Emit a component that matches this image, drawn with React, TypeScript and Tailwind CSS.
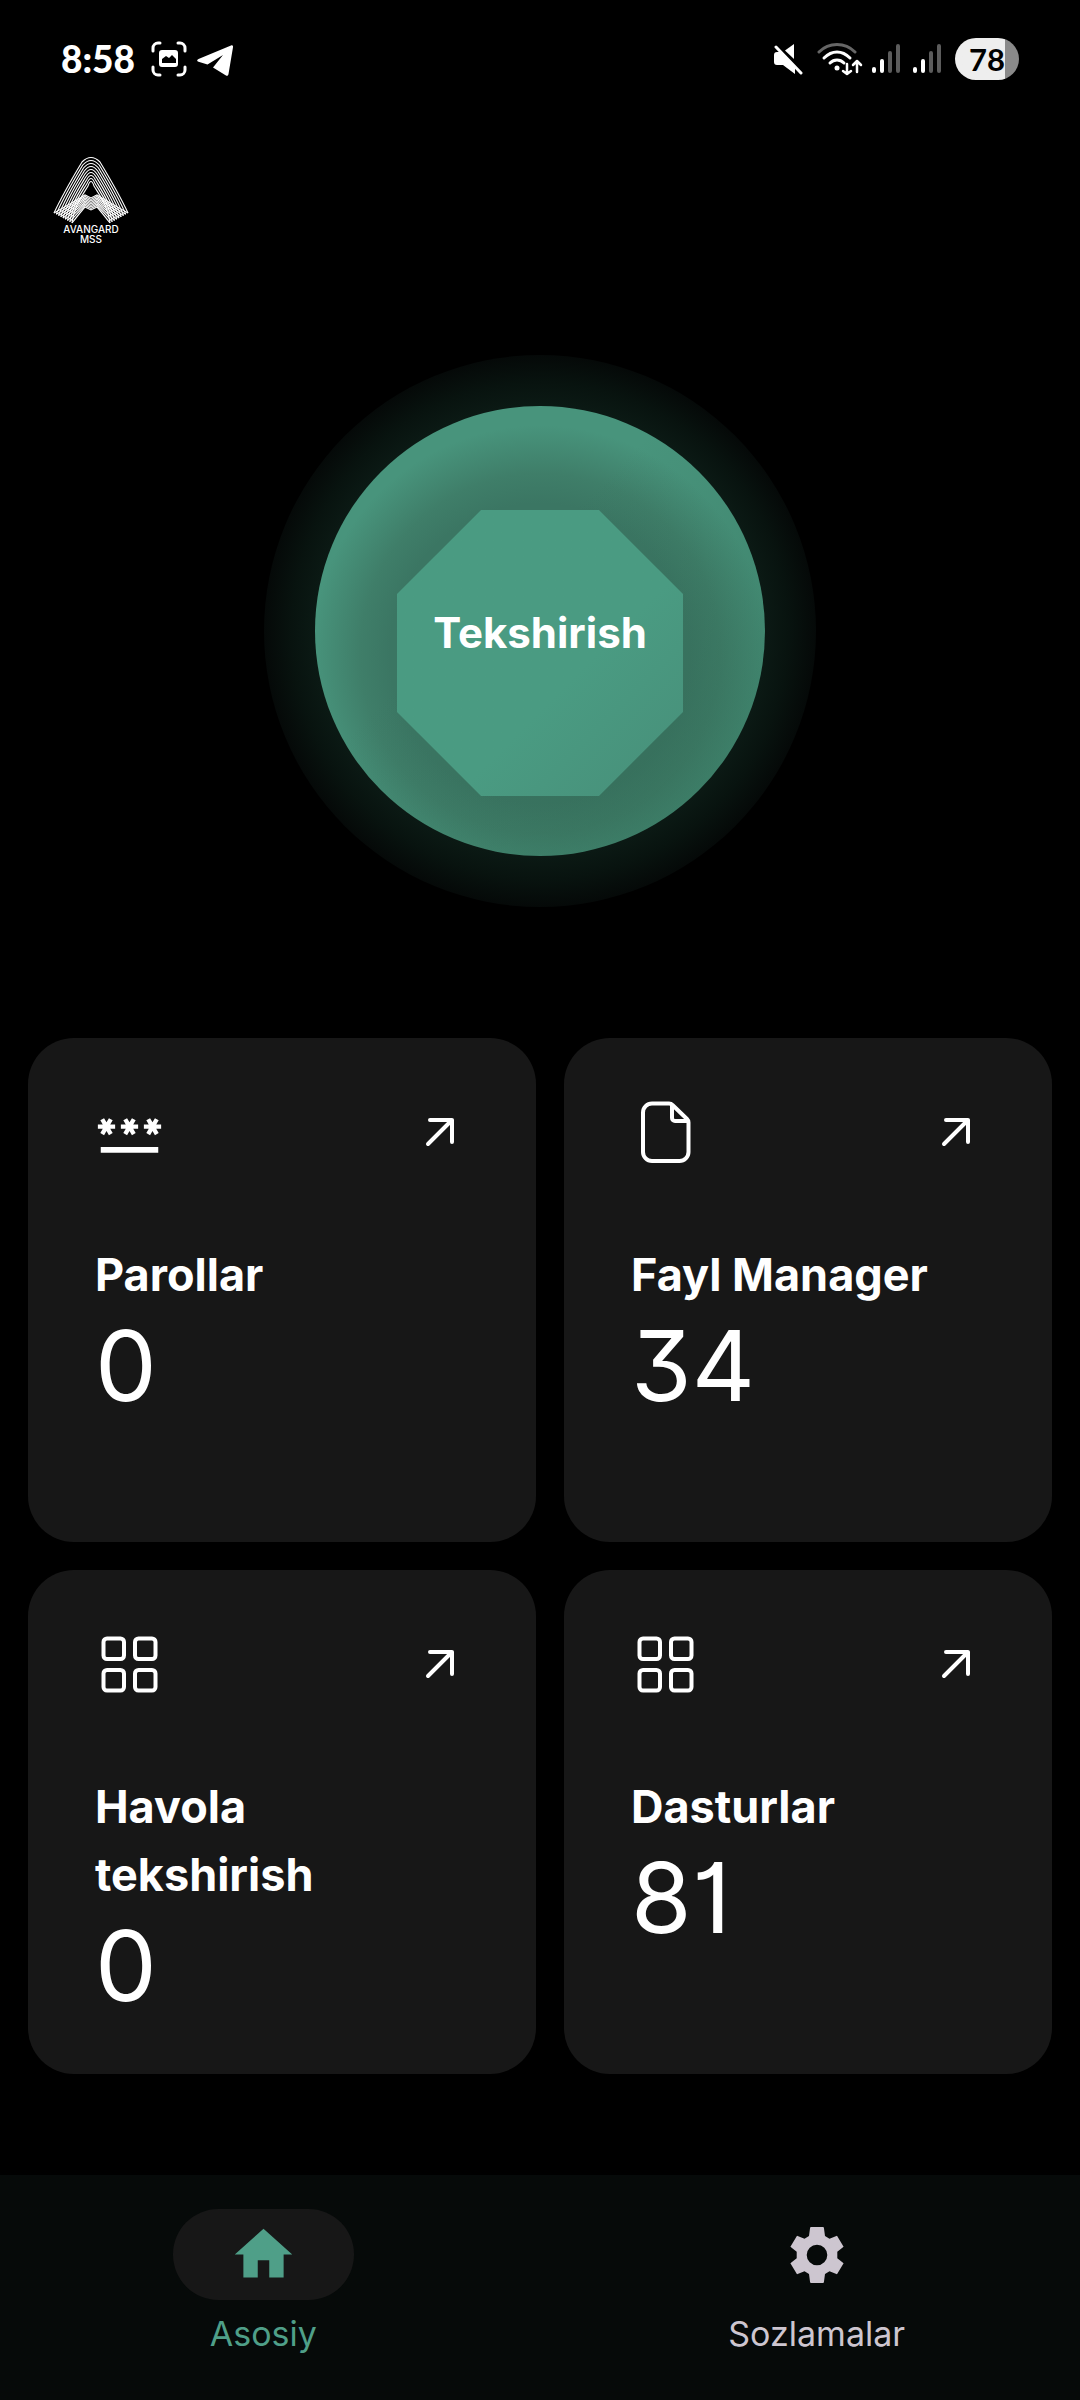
import clsx from 'clsx';
import type { ReactNode } from 'react';
import { MdHome, MdPassword } from 'react-icons/md';

type Tile = {
  title: string;
  count: number;
  href: string;
  icon: ReactNode;
};

const tiles: Tile[] = [
  { title: 'Parollar', count: 0, href: '#passwords', icon: <MdPassword className="size-[69px]" aria-hidden="true" /> },
  { title: 'Fayl Manager', count: 34, href: '#files', icon: <FileIcon /> },
  { title: 'Havola tekshirish', count: 0, href: '#links', icon: <GridIcon /> },
  { title: 'Dasturlar', count: 81, href: '#apps', icon: <GridIcon /> },
];

export default function App() {
  return (
    <div className="flex min-h-screen flex-col bg-black font-['Inter',sans-serif] text-white">
      <StatusBar />
      <header className="flex px-[53px] pt-[38px]">
        <Logo />
      </header>
      <main className="flex flex-col px-7">
        <ScanButton />
        <div className="mt-[131px] grid grid-cols-[508fr_488fr] gap-7">
          {tiles.map((tile) => (
            <TileCard key={tile.title} tile={tile} />
          ))}
        </div>
      </main>
      <BottomNav />
    </div>
  );
}

function ScanButton() {
  return (
    <div className="mt-[111px] flex size-[552px] items-center justify-center self-center rounded-full bg-[radial-gradient(closest-side,#0b1914_82%,#08130f_90%,#050908_100%)]">
      <button
        type="button"
        className="grid size-[450px] cursor-pointer place-content-center place-items-center rounded-full bg-[linear-gradient(135deg,transparent_40%,#2f655080_100%),radial-gradient(circle_at_50%_55%,#3b7663_150px,#3f7e69_180px,#48947c_228px)]"
      >
        <span
          aria-hidden="true"
          className="col-start-1 row-start-1 mt-11 size-[286px] bg-linear-to-br from-[#4a9b82] from-60% to-[#478f79] [clip-path:polygon(29.4%_0,70.6%_0,100%_29.4%,100%_70.6%,70.6%_100%,29.4%_100%,0_70.6%,0_29.4%)]"
        />
        <span className="z-10 col-start-1 row-start-1 pt-1 text-[42px] font-bold leading-[52px]">Tekshirish</span>
      </button>
    </div>
  );
}

function TileCard({ tile }: { tile: Tile }) {
  return (
    <a href={tile.href} className="flex min-h-[504px] flex-col rounded-[46px] bg-[#171717] px-[67px] pt-[60px]">
      <div className="flex items-center justify-between">
        {tile.icon}
        <svg viewBox="0 0 58 58" className="size-[58px]" fill="none" stroke="currentColor" strokeWidth="4" strokeLinecap="round" strokeLinejoin="round" aria-hidden="true">
          <path d="M17 40 41 16M19 16H41V38" />
        </svg>
      </div>
      <h2 className="mt-[74px] text-[45px] font-bold leading-[68px]">{tile.title}</h2>
      <p className="text-[98px] leading-[113px] [font-feature-settings:'cv01','cv09']">{tile.count}</p>
    </a>
  );
}

function BottomNav() {
  return (
    <nav className="mt-auto flex justify-between bg-[#060a09] px-[16%] pb-[42px] pt-[34px]">
      <NavItem label="Asosiy" href="#home" active icon={<MdHome className="size-[69px]" aria-hidden="true" />} />
      <NavItem label="Sozlamalar" href="#settings" icon={<GearIcon />} />
    </nav>
  );
}

function NavItem({ label, href, icon, active }: { label: string; href: string; icon: ReactNode; active?: boolean }) {
  return (
    <a
      href={href}
      aria-current={active ? 'page' : undefined}
      className={clsx('flex w-[181px] flex-col items-center gap-[10px]', active ? 'text-[#4f9f88]' : 'text-[#cdc6d0]')}
    >
      <span className={clsx('flex h-[91px] w-full items-center justify-center rounded-full', active && 'bg-[#171717]')}>
        {icon}
      </span>
      <span className="text-[34px] leading-[48px]">{label}</span>
    </a>
  );
}

function StatusBar() {
  return (
    <div className="flex h-[118px] items-center justify-between px-[61px]">
      <div className="flex items-center">
        <span className="font-['Lato',sans-serif] text-[37px] font-black leading-[42px]">8:58</span>
        {/* screenshot saved */}
        <svg viewBox="0 0 36 36" className="ml-4 size-9" fill="none" stroke="currentColor" strokeWidth="3" strokeLinecap="round" aria-hidden="true">
          <path d="M2 10V7a5 5 0 0 1 5-5h2M27 2h2a5 5 0 0 1 5 5v3M34 26v3a5 5 0 0 1-5 5h-2M9 34H7a5 5 0 0 1-5-5v-3" />
          <path d="M11 9h13a3 3 0 0 1 3 3v11a3 3 0 0 1-3 3H11a3 3 0 0 1-3-3V12a3 3 0 0 1 3-3zM11 22v-4l4-3 3 2 3-3 4 4v4z" fill="currentColor" fillRule="evenodd" stroke="none" />
        </svg>
        <svg viewBox="0 0 36 32" className="ml-[10px] mt-1 h-8 w-9" fill="currentColor" aria-hidden="true">
          <path d="M34 .5c1.500-.6 2.300.2 2 1.800L31.500 29c-.3 1.800-1.400 2.200-2.900 1.200L16 22.500 26 10 10.500 19.500 1.500 16.700C-.3 16.100-.3 14.800 1.500 14z" />
        </svg>
      </div>
      <div className="flex items-center">
        <svg viewBox="0 0 30 32" className="h-8 w-[30px]" fill="white" aria-hidden="true">
          <path d="M21 1V16L12 7.500z" />
          <path d="M4 9H8L22 23V31L10 22H4a3 3 0 0 1-3-3v-7a3 3 0 0 1 3-3z" />
          <path d="M3 4 28 30" stroke="white" strokeWidth="3" strokeLinecap="round" />
        </svg>
        <svg viewBox="0 0 46 34" className="ml-[14px] h-[34px] w-[46px]" fill="none" strokeWidth="3" strokeLinecap="round" strokeLinejoin="round" aria-hidden="true">
          <path d="M2 10C12 0 28 0 38 10" stroke="#666" />
          <path d="M7 16C15 8 25 8 33 16M13 21C17 17 23 17 27 21" stroke="white" />
          <circle cx="20" cy="26" r="2.500" fill="white" />
          <path d="M30 22v10M26 29l4 3 4-3M40 30V20M36 23l4-4 4 4" stroke="white" strokeWidth="2.500" />
        </svg>
        <SignalBars />
        <SignalBars />
        <span className="ml-[10px] flex h-[42px] w-16 items-center justify-center rounded-full bg-linear-to-r from-[#eee] from-78% to-[#8a8a8a] to-78% font-['Lato',sans-serif] text-[31px] font-bold leading-[42px] text-black">
          78
        </span>
      </div>
    </div>
  );
}

function SignalBars() {
  return (
    <svg viewBox="0 0 28 30" className="ml-[9px] mr-1 h-[30px] w-7" fill="none" strokeWidth="4" strokeLinecap="round" aria-hidden="true">
      <path d="M2 25v2M10 17v10" stroke="white" />
      <path d="M18 9v18M26 2v25" stroke="#5c5c5c" />
    </svg>
  );
}

const LOGO_STEPS = 9;

function Logo() {
  const steps = Array.from({ length: LOGO_STEPS }, (_, i) => i / (LOGO_STEPS - 1));
  return (
    <div className="flex w-[76px] flex-col items-center">
      <svg viewBox="0 0 76 68" className="h-[68px] w-[76px]" fill="none" stroke="currentColor" aria-hidden="true">
        {steps.map((t) => {
          const fx = 1 + 18 * t;
          const fy = 57 + 10 * t;
          const top = 2 + 24 * t;
          const sx = 28 + 6 * t;
          const mid = 40 + 12 * t;
          return (
            <g key={t} strokeWidth="1.100">
              {/* arch, then the chevron that runs foot to foot */}
              <path d={`M${fx} ${fy}C${8 + 13 * t} ${42 + 8 * t} ${sx - 5} ${top + 14} ${sx + 1} ${top + 4}Q38 ${top - 5} ${75 - sx} ${top + 4}C${81 - sx} ${top + 14} ${68 - 13 * t} ${42 + 8 * t} ${76 - fx} ${fy}`} />
              <path d={`M${fx} ${fy}Q${24 + 6 * t} ${44 + 9 * t} 32 ${mid - 1}L38 ${mid + 2}L44 ${mid - 1}Q${52 - 6 * t} ${44 + 9 * t} ${76 - fx} ${fy}`} />
            </g>
          );
        })}
      </svg>
      <span className="text-center text-[10px] font-medium leading-[10px]">
        AVANGARD
        <br />
        MSS
      </span>
    </div>
  );
}

function FileIcon() {
  return (
    <svg viewBox="0 0 69 69" className="size-[69px]" fill="none" stroke="currentColor" strokeWidth="4" strokeLinejoin="round" aria-hidden="true">
      <path d="M21 5.500H38a5 5 0 0 1 3.500 1.500L56 21a5 5 0 0 1 1.500 3.500V54a9 9 0 0 1-9 9H21a9 9 0 0 1-9-9V14.500a9 9 0 0 1 9-9z" />
      <path d="M41 7V20a3 3 0 0 0 3 3H57" />
    </svg>
  );
}

function GridIcon() {
  return (
    <svg viewBox="0 0 69 69" className="size-[69px]" fill="none" stroke="currentColor" strokeWidth="4" aria-hidden="true">
      <rect x="8.500" y="8.500" width="20.500" height="20.500" rx="3.500" />
      <rect x="40" y="8.500" width="20.500" height="20.500" rx="3.500" />
      <rect x="8.500" y="40" width="20.500" height="20.500" rx="3.500" />
      <rect x="40" y="40" width="20.500" height="20.500" rx="3.500" />
    </svg>
  );
}

function GearIcon() {
  return (
    <svg viewBox="-34 -34 68 68" className="size-[68px]" fill="currentColor" fillRule="evenodd" aria-hidden="true">
      <path d="M-6-28H6Q6.700-28 6.900-27.300L8-19 12.500-16.300 20-19.300 26.600-8.300 20.300-3.300V3.300L26.600 8.300 20 19.300 12.500 16.300 8 19 6.900 27.300Q6.700 28 6 28H-6Q-6.700 28-6.900 27.300L-8 19-12.500 16.300-20 19.300-26.600 8.300-20.300 3.300V-3.300L-26.600-8.300-20-19.300-12.500-16.300-8-19-6.900-27.300Q-6.700-28-6-28zM0-10.300A10.300 10.300 0 1 0 0 10.300 10.300 10.300 0 1 0 0-10.300z" />
    </svg>
  );
}
